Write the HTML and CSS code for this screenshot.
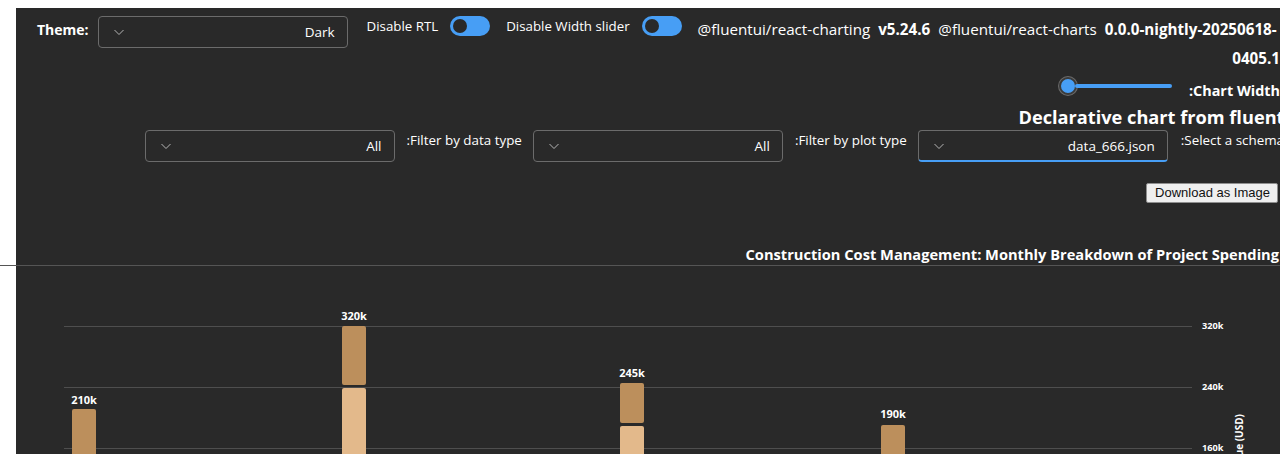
FILE: index.html
```html
<!DOCTYPE html>
<html>
<head>
<meta charset="utf-8">
<link rel="stylesheet" href="styles.css">
</head>
<body>
<div class="app">
  <div class="top-row">
    <span class="theme-label">Theme:</span>
    <div class="dropdown theme-dd">
      <svg class="chev" width="12" height="12" viewBox="0 0 12 12"><polyline points="1.5,4 6,8.5 10.5,4" fill="none" stroke="#b5b5b5" stroke-width="1"/></svg>
      <span class="dd-value">Dark</span>
    </div>
    <span class="switch-label first">Disable RTL</span>
    <span class="toggle"><span class="knob"></span></span>
    <span class="switch-label">Disable Width slider</span>
    <span class="toggle"><span class="knob"></span></span>
    <div class="versions">
      <div class="ver-line"><span>@fluentui/react-charting</span><b>v5.24.6</b><span>@fluentui/react-charts</span><b>0.0.0-nightly-20250618-</b></div>
      <div class="ver-line second"><b>0405.1</b></div>
    </div>
  </div>

  <div class="width-row">
    <div class="slider"><span class="thumb"></span><span class="track"></span></div>
    <span class="width-label">:Chart Width</span>
  </div>

  <div class="heading">Declarative chart from fluentui</div>

  <div class="filter-row">
    <div class="dropdown">
      <svg class="chev" width="12" height="12" viewBox="0 0 12 12"><polyline points="1.5,4 6,8.5 10.5,4" fill="none" stroke="#b5b5b5" stroke-width="1"/></svg>
      <span class="dd-value">All</span>
    </div>
    <span class="filter-label">:Filter by data type</span>
    <div class="dropdown">
      <svg class="chev" width="12" height="12" viewBox="0 0 12 12"><polyline points="1.5,4 6,8.5 10.5,4" fill="none" stroke="#b5b5b5" stroke-width="1"/></svg>
      <span class="dd-value">All</span>
    </div>
    <span class="filter-label">:Filter by plot type</span>
    <div class="dropdown focused">
      <svg class="chev" width="12" height="12" viewBox="0 0 12 12"><polyline points="1.5,4 6,8.5 10.5,4" fill="none" stroke="#b5b5b5" stroke-width="1"/></svg>
      <span class="dd-value">data_666.json</span>
    </div>
    <span class="filter-label last">:Select a schema</span>
  </div>

  <div class="download-row">
    <button class="download">Download as Image</button>
  </div>

  <div class="chart-title">Construction Cost Management: Monthly Breakdown of Project Spending</div>

  <div class="chart">
    <svg width="1264" height="188" viewBox="0 0 1264 188">
      <g stroke="#4e4e4e" stroke-width="1">
        <line x1="48" y1="60.5" x2="1176" y2="60.5"/>
        <line x1="48" y1="121.5" x2="1176" y2="121.5"/>
        <line x1="48" y1="182.5" x2="1176" y2="182.5"/>
      </g>
      <g class="tick">
        <text x="1186" y="63">320k</text>
        <text x="1186" y="124">240k</text>
        <text x="1186" y="185">160k</text>
      </g>
      <text class="axis-title" transform="translate(1227,177) rotate(-90)" text-anchor="middle">Value (USD)</text>
      <g>
        <rect x="56" y="143" width="24" height="60" rx="2" fill="#bc8f5c"/>
        <rect x="326" y="60" width="24" height="59" rx="2" fill="#bc8f5c"/>
        <rect x="326" y="122" width="24" height="80" rx="2" fill="#e3b98b"/>
        <rect x="604" y="117" width="24" height="40" rx="2" fill="#bc8f5c"/>
        <rect x="604" y="160" width="24" height="40" rx="2" fill="#e3b98b"/>
        <rect x="865" y="159" width="24" height="40" rx="2" fill="#bc8f5c"/>
      </g>
      <g class="bar-label" text-anchor="middle">
        <text x="68" y="138">210k</text>
        <text x="338" y="54">320k</text>
        <text x="616" y="111">245k</text>
        <text x="877" y="152">190k</text>
      </g>
    </svg>
  </div>
</div>
</body>
</html>
```

FILE: styles.css
```css
html, body {
  margin: 0;
  padding: 0;
  background: #ffffff;
  overflow: hidden;
  height: 454px;
}

.app {
  margin: 8px 0 0 16px;
  background: #292929;
  height: 446px;
  color: #ffffff;
  font-family: "Open Sans", "Noto Sans", sans-serif;
  font-size: 13px;
}

.top-row {
  display: flex;
  align-items: flex-start;
  padding: 8px 0 0 21px;
}

.theme-label {
  font-weight: 700;
  font-size: 14px;
  line-height: 28px;
  margin-right: 9px;
}

.dropdown {
  box-sizing: border-box;
  width: 250px;
  height: 32px;
  border: 1px solid #6b6b6b;
  border-radius: 4px;
  display: flex;
  align-items: center;
  justify-content: space-between;
  padding: 0 12px 0 14px;
  font-size: 13.5px;
  flex-shrink: 0;
}

.dropdown.focused {
  border-bottom: 2px solid #479ef5;
}

.chev {
  display: block;
}

.dd-value {
  color: #ffffff;
}

.switch-label {
  font-size: 13.3px;
  line-height: 20px;
  margin-left: 16px;
  margin-right: 12px;
}

.switch-label.first {
  margin-left: 19px;
}

.toggle {
  box-sizing: border-box;
  width: 40px;
  height: 20px;
  border-radius: 10px;
  background: #479ef5;
  display: flex;
  align-items: center;
  padding-left: 3px;
  flex-shrink: 0;
}

.knob {
  width: 14px;
  height: 14px;
  border-radius: 50%;
  background: #292929;
}

.versions {
  margin-left: 16px;
  flex: 1;
  font-size: 15.2px;
  line-height: 29px;
  margin-top: -1px;
  white-space: nowrap;
}

.ver-line {
  display: flex;
  gap: 8px;
}

.ver-line.second {
  justify-content: flex-end;
}

.versions b {
  font-weight: 700;
}

.width-row {
  display: flex;
  justify-content: flex-end;
  align-items: center;
  height: 26px;
}

.slider {
  display: flex;
  align-items: center;
  width: 113px;
  margin-right: 17px;
}

.thumb {
  box-sizing: border-box;
  width: 18px;
  height: 18px;
  border-radius: 50%;
  border: 2px solid #3a3a3a;
  background: #479ef5;
  box-shadow: 0 0 0 1px #6a6a6a;
  flex-shrink: 0;
}

.track {
  flex: 1;
  height: 4px;
  border-radius: 2px;
  background: #479ef5;
  margin-left: -2px;
}

.width-label {
  font-weight: 700;
  font-size: 14.4px;
  margin-top: 8px;
  margin-right: 0;
}

.heading {
  text-align: right;
  font-weight: 700;
  font-size: 18.2px;
  line-height: 24px;
  margin-top: 6px;
  margin-right: -22px;
  white-space: nowrap;
}

.filter-row {
  display: flex;
  justify-content: flex-end;
  align-items: flex-start;
  margin-top: 1px;
  margin-right: -4px;
}

.filter-label {
  font-size: 13.4px;
  line-height: 20px;
  margin: 0 11px 0 12px;
  white-space: nowrap;
}

.filter-label.last {
  margin: 0 0 0 13px;
}

.download-row {
  display: flex;
  justify-content: flex-end;
  padding-top: 21px;
  padding-right: 2px;
}

.download {
  font-family: "Liberation Sans", Arial, sans-serif;
  font-size: 13px;
  color: #111111;
  background: #efefef;
  border: 1px solid #8f8f8f;
  border-radius: 2px;
  height: 20px;
  padding: 0 7px 0 8px;
  line-height: 18px;
}

.chart-title {
  text-align: right;
  font-weight: 700;
  font-size: 14.65px;
  line-height: 20px;
  margin-top: 41px;
  padding-bottom: 1px;
  border-bottom: 1px solid #555555;
  margin-left: -16px;
  padding-right: 1px;
  white-space: nowrap;
}

.chart svg {
  display: block;
}

.tick text {
  fill: #ffffff;
  font-size: 9.2px;
  font-weight: 700;
  font-family: "Open Sans", sans-serif;
}

.axis-title {
  fill: #ffffff;
  font-size: 10px;
  font-weight: 700;
  font-family: "Open Sans", sans-serif;
}

.bar-label text {
  fill: #ffffff;
  font-size: 11px;
  font-weight: 700;
  font-family: "Open Sans", sans-serif;
}
```
